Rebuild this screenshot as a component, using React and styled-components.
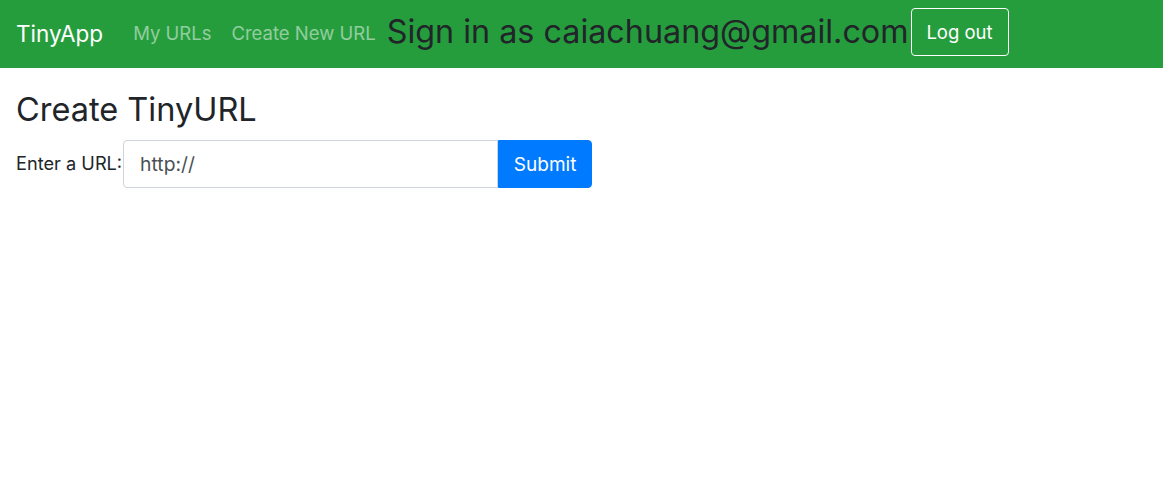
import styled, { createGlobalStyle } from "styled-components";

const GlobalStyle = createGlobalStyle`
  body {
    margin: 0;
    background: #fff;
    color: #212529;
    font-family: Inter, "Liberation Sans", Arial, sans-serif;
    font-size: 16px;
    line-height: 1.5;
  }
`;

const Navbar = styled.nav`
  height: 68px;
  box-sizing: border-box;
  background: #259d3d;
  display: flex;
  align-items: center;
  padding: 0 16px;
`;

const Brand = styled.a`
  color: #fff;
  font-size: 22.5px;
  margin-right: 30px;
  text-decoration: none;
`;

const NavLink = styled.a`
  color: rgba(255, 255, 255, 0.5);
  font-size: 18.5px;
  margin-right: 20px;
  text-decoration: none;
  &:last-of-type {
    margin-right: 11px;
  }
`;

const SignedIn = styled.h2`
  margin: 0 2px 4px 0;
  font-size: 32.3px;
  font-weight: 400;
  line-height: 1.2;
  color: #212529;
`;

const Button = styled.button`
  font-family: inherit;
  font-size: 18.5px;
  height: 48px;
  padding: 0 16px;
  border-radius: 4px;
  cursor: pointer;
  border: 1px solid ${(p) => (p.$outline ? "#fff" : "#007bff")};
  background: ${(p) => (p.$outline ? "transparent" : "#007bff")};
  color: #fff;
`;

const LogoutButton = styled(Button)`
  width: 98px;
  padding: 0;
  margin-bottom: 4px;
`;

const Main = styled.main`
  padding: 22px 16px;
`;

const Title = styled.h1`
  margin: 0 0 11px;
  font-size: 32.5px;
  font-weight: 400;
  line-height: 1.2;
`;

const Form = styled.form`
  display: flex;
  align-items: center;
`;

const Label = styled.label`
  font-size: 18.2px;
  margin-right: 1px;
`;

const Input = styled.input`
  width: 375px;
  height: 48px;
  box-sizing: border-box;
  padding: 0 16px;
  font-family: inherit;
  font-size: 19.3px;
  color: #495057;
  border: 1px solid #ced4da;
  border-radius: 4px 0 0 4px;
  outline: none;
`;

const SubmitButton = styled(Button)`
  width: 94px;
  padding: 0;
  font-size: 19px;
  border-radius: 0 4px 4px 0;
`;

export default function App() {
  return (
    <>
      <GlobalStyle />
      <Navbar>
        <Brand href="#">TinyApp</Brand>
        <NavLink href="#">My URLs</NavLink>
        <NavLink href="#">Create New URL</NavLink>
        <SignedIn>Sign in as caiachuang@gmail.com</SignedIn>
        <LogoutButton $outline>Log out</LogoutButton>
      </Navbar>
      <Main>
        <Title>Create TinyURL</Title>
        <Form>
          <Label>Enter a URL:</Label>
          <Input defaultValue="http://" />
          <SubmitButton type="button">Submit</SubmitButton>
        </Form>
      </Main>
    </>
  );
}
